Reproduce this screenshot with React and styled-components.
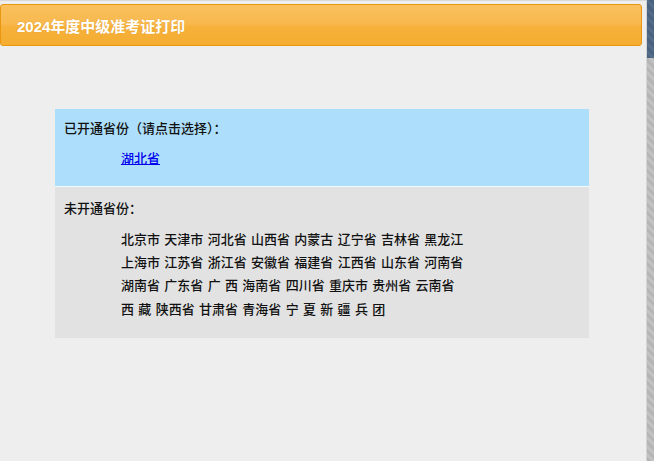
import React from "react";
import styled, { createGlobalStyle } from "styled-components";

const Global = createGlobalStyle`
  html, body { margin: 0; padding: 0; }
  body {
    font-family: "Noto Sans CJK SC", "Liberation Sans", sans-serif;
    background: #eeeeee;
  }
`;

const Shell = styled.div`
  display: flex;
  height: 461px;
  overflow: hidden;
`;

const Main = styled.div`
  flex: 1;
  background: #eeeeee;
  border-top: 1px solid #d9d9d9;
  padding: 3px 4px 0 0;
  box-sizing: border-box;
`;

const Strip = styled.div`
  width: 7px;
  border-left: 1px solid #d4d4d4;
  background: repeating-linear-gradient(
    45deg,
    #b5b5b5 0 3px,
    #c2c2c2 3px 6px
  );
`;

const StripThumb = styled.div`
  height: 58px;
  background: repeating-linear-gradient(
    45deg,
    #4a6280 0 3px,
    #536c89 3px 6px
  );
`;

const Header = styled.div`
  height: 40px;
  border: 1px solid #eb960f;
  border-radius: 3px;
  background: linear-gradient(
    to bottom,
    #f9c05c 0%,
    #f8b94f 45%,
    #f6b13b 55%,
    #f5ad31 100%
  );
  display: flex;
  align-items: center;
  padding-left: 16px;
  color: #ffffff;
  font-family: "Liberation Sans", "Noto Sans CJK SC", sans-serif;
  font-weight: bold;
  font-size: 15px;
  text-shadow: 0 0 1px rgba(160, 90, 0, 0.25);
`;

const Content = styled.div`
  margin: 63px 0 0 55px;
  width: 534px;
  font-size: 13px;
  font-weight: 500;
  color: #111111;
`;

const Panel = styled.div`
  background: ${(p) => p.$bg};
  padding: ${(p) => p.$pad};
  border-bottom: ${(p) => (p.$divider ? "1px solid #f2f9ff" : "none")};
`;

const Label = styled.div`
  line-height: 20px;
  padding-left: 9px;
`;

const Body = styled.div`
  padding-left: 66px;
  margin-top: ${(p) => p.$gap};
`;

const Link = styled.a`
  color: #0000ee;
  text-decoration: underline;
  line-height: 20px;
  display: inline-block;
`;

const Row = styled.div`
  line-height: 23.33px;
  word-spacing: 1.4px;
  white-space: nowrap;
`;

const rows = [
  "北京市 天津市 河北省 山西省 内蒙古 辽宁省 吉林省 黑龙江",
  "上海市 江苏省 浙江省 安徽省 福建省 江西省 山东省 河南省",
  "湖南省 广东省 广 西 海南省 四川省 重庆市 贵州省 云南省",
  "西 藏 陕西省 甘肃省 青海省 宁 夏 新 疆 兵 团",
];

export default function App() {
  return (
    <>
      <Global />
      <Shell>
        <Main>
          <Header>2024年度中级准考证打印</Header>
          <Content>
            <Panel $bg="#addffc" $pad="9px 0 18px" $divider>
              <Label>已开通省份（请点击选择）：</Label>
              <Body $gap="10px">
                <Link href="#">湖北省</Link>
              </Body>
            </Panel>
            <Panel $bg="#e2e2e2" $pad="11px 0 18px">
              <Label>未开通省份：</Label>
              <Body $gap="8.6px">
                {rows.map((r) => (
                  <Row key={r}>{r}</Row>
                ))}
              </Body>
            </Panel>
          </Content>
        </Main>
        <Strip>
          <StripThumb />
        </Strip>
      </Shell>
    </>
  );
}
